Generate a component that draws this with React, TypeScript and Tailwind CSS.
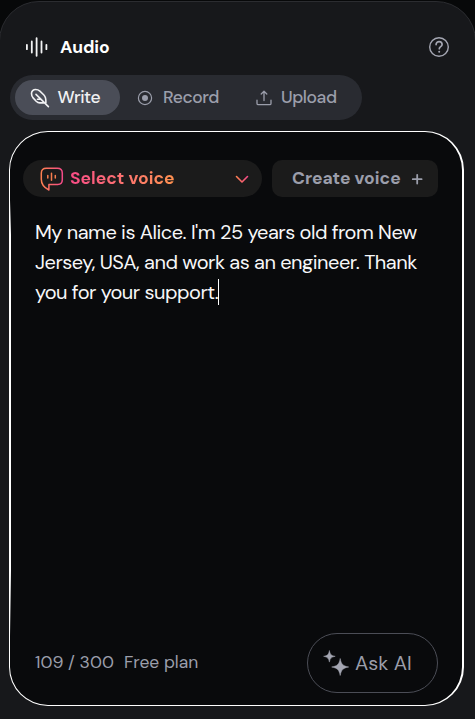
import type { ReactNode } from "react";

function Label({ children, className }: { children: ReactNode; className: string }) {
  return <span className={`shrink-0 whitespace-nowrap ${className}`}>{children}</span>;
}

function WaveIcon() {
  return (
    <svg className="h-6 w-6 shrink-0" viewBox="0 0 24 24" fill="none" stroke="#f3f3f4" strokeWidth="1.8" strokeLinecap="round">
      <path d="M1.9 9.8v4.4M6.8 6.4v11.2M11.6 3.2v17.6M16.5 6.4v11.2M21.4 9.8v4.4" />
    </svg>
  );
}

function LeafIcon() {
  return (
    <svg className="h-5 w-5 shrink-0" viewBox="0 0 20 20" fill="none" stroke="#f1f1f3" strokeWidth="1.6" strokeLinecap="round" strokeLinejoin="round">
      <path d="M6 6.400 18.400 18.600M1.500 5.600C1.500 3.200 3.300 1.500 5.600 1.500c1.800 0 3 .5 4.300 1.700l4 3.800c1.900 1.800 2.200 3.400 2 7.900H9.800c-1.500 0-2.500-.6-3.600-1.700L3.100 9.900C2 8.700 1.500 7.300 1.500 5.600ZM7.500 11.200h3.200" />
    </svg>
  );
}

function VoiceIcon() {
  return (
    <svg className="h-[25px] w-6 shrink-0" viewBox="0 0 24 25" fill="none" strokeLinecap="round" strokeLinejoin="round">
      <defs>
        <linearGradient id="voice-stroke" x1="0" y1="0" x2="1" y2="0">
          <stop stopColor="#ff8051" />
          <stop offset="1" stopColor="#f54a88" />
        </linearGradient>
      </defs>
      <path d="M6.300 2.300h11c3.300 0 5 1.700 5 4.900v6.600c0 3.100-1.600 4.700-4.600 4.700H8.900v5.500C4.300 21.800 1.300 18.700 1.300 13.300V7.200c0-3.200 1.800-4.900 5-4.900Z" stroke="url(#voice-stroke)" strokeWidth="1.5" />
      <path d="M7.800 9.600v2.400M11.500 7.300v7M15.300 9.600v2.400" stroke="#f77d4e" strokeWidth="1.5" />
    </svg>
  );
}

function SparkleIcon() {
  return (
    <svg className="h-[26px] w-[26px] shrink-0" viewBox="0 0 26 26" fill="#a4a6b2" stroke="#a4a6b2" strokeWidth="0.5" strokeLinejoin="round">
      <path d="M6.400.5c.7 4 1.900 5.200 5.800 5.800-3.900.7-5.100 1.900-5.800 5.800C5.700 8.200 4.500 7 .6 6.300 4.500 5.700 5.700 4.500 6.400.5Z" />
      <path d="M17.200 8.500c1.100 5.900 2.800 7.400 8.500 8.500-5.700 1.100-7.400 2.800-8.500 8.500-1.100-5.700-2.800-7.400-8.500-8.500 5.700-1.100 7.400-2.600 8.500-8.500Z" />
    </svg>
  );
}

export default function App() {
  return (
    <div className="h-[719px] w-[475px] overflow-hidden bg-[#070809] font-['DM_Sans','Inter',sans-serif] text-[#9b9eab]">
      <main className="mt-px -ml-px flex h-[770px] w-[477px] flex-col rounded-[40px] border border-[#2b2c30] bg-[#17181b] pt-[33px] pr-[10px] pl-[9px]">
        <header className="flex h-6 shrink-0 items-center pl-4">
          <WaveIcon />
          <Label className="ml-[11px] text-[17.5px] leading-6 font-bold tracking-[-0.05px] text-white">Audio</Label>
          <svg className="mr-[15px] ml-auto h-[22px] w-[22px]" viewBox="0 0 22 22" fill="none" stroke="#a4a6b2" strokeWidth="1.4" strokeLinecap="round">
            <circle cx="11" cy="11" r="9.3" />
            <path d="M8.1 8.6c0-4 6-3.8 6 0 0 2-2.8 2.1-2.8 4.1" strokeWidth="1.7" />
            <circle cx="11.2" cy="15.7" r="1" fill="#a4a6b2" stroke="none" />
          </svg>
        </header>

        <nav className="mt-4 ml-px flex h-[45px] w-[352px] shrink-0 items-center rounded-full bg-[#292b31] pl-[5px] text-[17.5px] font-medium">
          <button className="flex h-[35px] w-[105px] items-center rounded-full bg-[#4a4d57] pl-[15px] text-[#f1f1f3]">
            <LeafIcon />
            <Label className="ml-[7.5px] tracking-[-0.5px]">Write</Label>
          </button>
          <button className="flex h-[35px] w-[119px] items-center pl-[17px]">
            <svg className="h-4 w-4 shrink-0" viewBox="0 0 16 16">
              <circle cx="8" cy="8" r="6.6" fill="none" stroke="#9b9eab" strokeWidth="1.2" />
              <circle cx="8" cy="8" r="3" fill="#9b9eab" />
            </svg>
            <Label className="ml-[10px] tracking-[-0.4px]">Record</Label>
          </button>
          <button className="flex h-[35px] items-center pl-[17px]">
            <svg className="h-4 w-4 shrink-0" viewBox="0 0 16 16" fill="none" stroke="#9b9eab" strokeWidth="1.3" strokeLinecap="round" strokeLinejoin="round">
              <path d="M8 10.5V1.3M5.2 4 8 1.2 10.8 4M1 10.2v3.2q0 1.3 1.3 1.3h11.4q1.3 0 1.3-1.3v-3.2" />
            </svg>
            <Label className="ml-[9px] tracking-[-0.45px]">Upload</Label>
          </button>
        </nav>

        <section className="relative mt-[11px] flex h-[575px] w-[455px] shrink-0 flex-col rounded-[39px] border border-r-2 border-white bg-[#090a0c]">
          <div className="absolute top-[68px] left-0 h-[436px] w-px bg-[linear-gradient(to_bottom,transparent,white_8%,white_85%,transparent)]" />
          <div className="mt-7 ml-[13px] flex gap-[10px] text-[17.5px] font-bold">
            <button className="flex h-[37px] w-[239px] items-center rounded-full bg-[#1b1b1b] pl-[17px]">
              <VoiceIcon />
              <Label className="ml-[6px] bg-linear-to-r from-[#f94b86] to-[#ff914e] bg-clip-text text-transparent">Select voice</Label>
              <svg className="mr-[13px] ml-auto h-[14px] w-[14px]" viewBox="0 0 14 14" fill="none" strokeWidth="1.6" strokeLinecap="round" strokeLinejoin="round">
                <defs>
                  <linearGradient id="chevron-stroke">
                    <stop stopColor="#ff8051" />
                    <stop offset="1" stopColor="#f54a88" />
                  </linearGradient>
                </defs>
                <path d="m1.5 4.5 5.5 5.5 5.5-5.5" stroke="url(#chevron-stroke)" />
              </svg>
            </button>
            <button className="flex h-[37px] w-[166px] items-center rounded-[10px] bg-[#1b1b1b] pl-5">
              <Label className="">Create voice</Label>
              <svg className="mr-[15px] ml-auto h-3 w-3" viewBox="0 0 12 12" stroke="#9b9eab" strokeWidth="1.8" strokeLinecap="round">
                <path d="M6.2 1.8v8.8M1.8 6.2h8.8" />
              </svg>
            </button>
          </div>

          <div className="mt-5 ml-[25px] flex flex-col text-[20px] leading-[30px] tracking-[-0.5px] text-[#f7f7f8]">
            <Label className="">My name is Alice. I'm 25 years old from New</Label>
            <Label className="">Jersey, USA, and work as an engineer. Thank</Label>
            <div className="flex items-center">
              <Label className="">you for your support.</Label>
              <span className="h-[26px] w-px bg-white" />
            </div>
          </div>

          <footer className="mt-auto mr-6 mb-3 ml-[25px] flex h-[60px] items-center text-[17.5px]">
            <Label className="pb-0.5">109 / 300</Label>
            <Label className="ml-[10px] pb-0.5">Free plan</Label>
            <button className="ml-auto flex h-[60px] w-[131px] items-center rounded-[30px] border border-[#4b4d56] pl-[15px] text-[20px]">
              <SparkleIcon />
              <Label className="ml-[6px]">Ask AI</Label>
            </button>
          </footer>
        </section>
      </main>
    </div>
  );
}
